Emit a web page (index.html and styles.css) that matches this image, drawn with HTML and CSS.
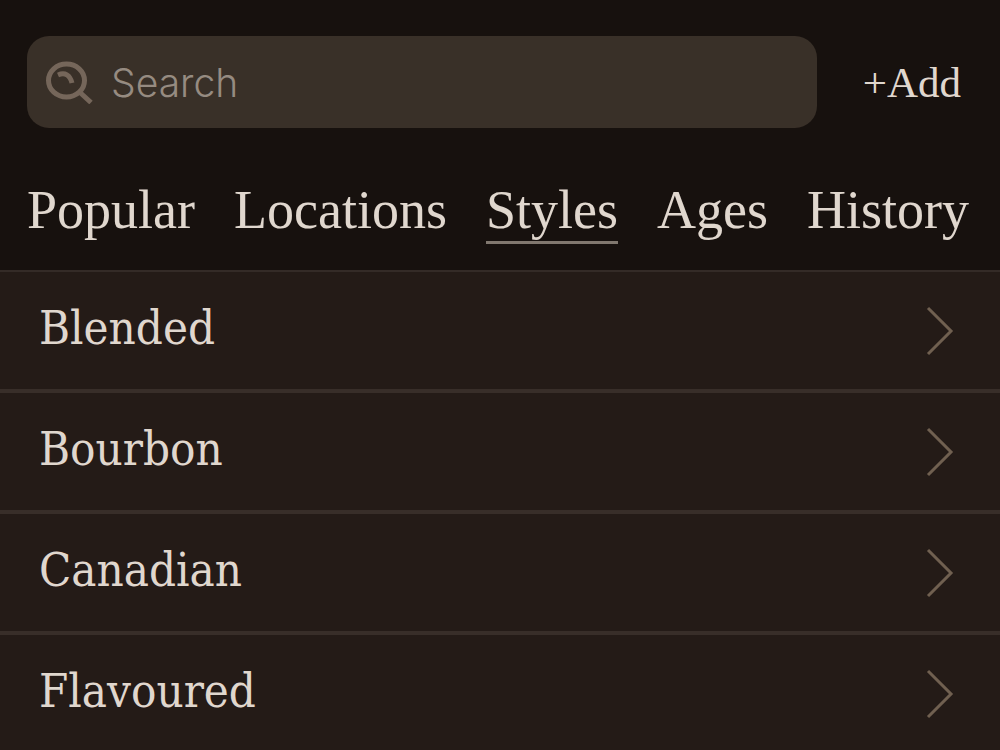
FILE: index.html
```html
<!DOCTYPE html>
<html lang="en">
<head>
    <meta charset="UTF-8">
    <meta name="viewport" content="width=device-width, initial-scale=1.0">
    <title>Styles</title>
    <link rel="stylesheet" href="styles.css">
</head>
<body>
    <header class="header">
        <div class="search-row">
            <label class="search-box">
                <svg class="search-icon" viewBox="0 0 48 44" aria-hidden="true">
                    <ellipse cx="21.5" cy="20.5" rx="18" ry="16.5"/>
                    <path d="M34.5 32l11.5 10.5"/>
                    <path d="M13 15c7-3 12 0 14 8"/>
                </svg>
                <input class="search-input" type="search" placeholder="Search" aria-label="Search">
            </label>
            <button class="add-button" type="button">+Add</button>
        </div>
        <nav class="tabs">
            <a class="tab" href="#">Popular</a>
            <a class="tab" href="#">Locations</a>
            <a class="tab active" href="#" aria-current="page">Styles</a>
            <a class="tab" href="#">Ages</a>
            <a class="tab" href="#">History</a>
        </nav>
    </header>
    <main class="list">
        <a class="list-item" href="#">
            <span class="item-name">Blended</span>
            <svg class="chevron" viewBox="0 0 28 50" aria-hidden="true"><path d="M2 2l23 23L2 48"/></svg>
        </a>
        <a class="list-item" href="#">
            <span class="item-name">Bourbon</span>
            <svg class="chevron" viewBox="0 0 28 50" aria-hidden="true"><path d="M2 2l23 23L2 48"/></svg>
        </a>
        <a class="list-item" href="#">
            <span class="item-name">Canadian</span>
            <svg class="chevron" viewBox="0 0 28 50" aria-hidden="true"><path d="M2 2l23 23L2 48"/></svg>
        </a>
        <a class="list-item" href="#">
            <span class="item-name">Flavoured</span>
            <svg class="chevron" viewBox="0 0 28 50" aria-hidden="true"><path d="M2 2l23 23L2 48"/></svg>
        </a>
    </main>
</body>
</html>
```
FILE: styles.css
```css
* {
    box-sizing: border-box;
}

body {
    margin: 0;
    height: 100vh;
    display: flex;
    flex-direction: column;
    background-color: #241b17;
    color: #e0d7ce;
    font-family: "Liberation Serif", serif;
}

.header {
    flex: none;
    padding-top: 36px;
    background-color: #17110e;
    border-bottom: 2px solid #342b27;
}

.search-row {
    display: flex;
    align-items: center;
    gap: 46px;
    padding: 0 39px 0 27px;
}

.search-box {
    flex: 1;
    min-width: 0;
    height: 92px;
    display: flex;
    align-items: center;
    gap: 18px;
    padding: 0 18px;
    background-color: #393028;
    border-radius: 22px;
}

.search-icon {
    flex: none;
    width: 48px;
    height: 44px;
    fill: none;
    stroke: #75665a;
    stroke-width: 5;
}

.search-input {
    flex: 1;
    min-width: 0;
    padding: 0;
    border: none;
    outline: none;
    background: none;
    color: #e0d7ce;
    font-family: Inter, sans-serif;
    font-size: 39px;
    font-weight: 300;
}

.search-input::placeholder {
    color: #968b81;
    opacity: 1;
}

.add-button {
    padding: 0;
    border: none;
    background: none;
    color: inherit;
    font-family: inherit;
    font-size: 43px;
    cursor: pointer;
}

.tabs {
    display: flex;
    gap: 39px;
    padding: 52px 27px 26px;
}

.tab {
    color: inherit;
    font-size: 54px;
    line-height: 61px;
    text-decoration: none;
    border-bottom: 3px solid transparent;
}

.tab.active {
    border-color: #81786f;
}

.list {
    flex: 1;
    min-height: 0;
    overflow-y: auto;
    scrollbar-width: none;
}

.list-item {
    display: flex;
    align-items: center;
    justify-content: space-between;
    height: 121px;
    padding: 0 46px 0 39px;
    border-bottom: 4px solid #382e29;
    color: inherit;
    text-decoration: none;
}

.item-name {
    padding-bottom: 6px;
    font-family: "DejaVu Serif Condensed", "DejaVu Serif", serif;
    font-size: 47px;
}

.chevron {
    width: 28px;
    height: 50px;
    fill: none;
    stroke: #706050;
    stroke-width: 3;
}
```
